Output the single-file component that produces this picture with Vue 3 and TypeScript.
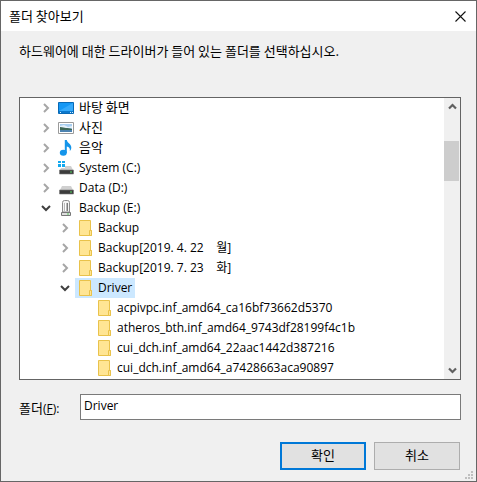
<script setup lang="ts">
import { ref } from 'vue'

type IconName = 'desktop' | 'picture' | 'music' | 'system' | 'disk' | 'usb' | 'folder'

interface TreeNode {
  label: string
  icon: IconName
  level: number
  state: 'open' | 'closed' | 'leaf'
  korean?: boolean
}

const nodes: TreeNode[] = [
  { label: '바탕 화면', icon: 'desktop', level: 0, state: 'closed', korean: true },
  { label: '사진', icon: 'picture', level: 0, state: 'closed', korean: true },
  { label: '음악', icon: 'music', level: 0, state: 'closed', korean: true },
  { label: 'System (C:)', icon: 'system', level: 0, state: 'closed' },
  { label: 'Data (D:)', icon: 'disk', level: 0, state: 'closed' },
  { label: 'Backup (E:)', icon: 'usb', level: 0, state: 'open' },
  { label: 'Backup', icon: 'folder', level: 1, state: 'closed' },
  { label: 'Backup[2019. 4. 22    월]', icon: 'folder', level: 1, state: 'closed' },
  { label: 'Backup[2019. 7. 23    화]', icon: 'folder', level: 1, state: 'closed' },
  { label: 'Driver', icon: 'folder', level: 1, state: 'open' },
  { label: 'acpivpc.inf_amd64_ca16bf73662d5370', icon: 'folder', level: 2, state: 'leaf' },
  { label: 'atheros_bth.inf_amd64_9743df28199f4c1b', icon: 'folder', level: 2, state: 'leaf' },
  { label: 'cui_dch.inf_amd64_22aac1442d387216', icon: 'folder', level: 2, state: 'leaf' },
  { label: 'cui_dch.inf_amd64_a7428663aca90897', icon: 'folder', level: 2, state: 'leaf' },
]

const selected = ref(9)
const folder = ref('Driver')

function select(index: number) {
  selected.value = index
  folder.value = nodes[index].label
}
</script>

<template>
  <main class="dialog" role="dialog" aria-labelledby="dialog-title">
    <header class="titlebar">
      <h1 id="dialog-title">폴더 찾아보기</h1>
      <button class="close" type="button" aria-label="닫기">
        <svg width="11" height="11" viewBox="0 0 11 11">
          <path d="M.5 .5l10 10M10.5 .5l-10 10" fill="none" stroke="#111" stroke-width="1.1" />
        </svg>
      </button>
    </header>

    <form class="content" @submit.prevent>
      <p class="message">하드웨어에 대한 드라이버가 들어 있는 폴더를 선택하십시오.</p>

      <div class="browser">
        <ul class="tree" role="tree">
          <li
            v-for="(node, i) in nodes"
            :key="i"
            class="row"
            :class="'level-' + node.level"
            role="treeitem"
            :aria-selected="i === selected"
          >
            <span class="arrow">
              <svg v-if="node.state === 'closed'" width="12" height="12" viewBox="0 0 12 12">
                <path d="M4 2l4 4-4 4" fill="none" stroke="#a6a6a6" stroke-width="2" />
              </svg>
              <svg v-else-if="node.state === 'open'" width="12" height="12" viewBox="0 0 12 12">
                <path d="M2 4l4 4 4-4" fill="none" stroke="#404040" stroke-width="2" />
              </svg>
            </span>
            <button class="item" :class="{ selected: i === selected, korean: node.korean }" type="button" @click="select(i)">
              <svg class="icon" width="16" height="16" viewBox="0 0 16 16">
                <g v-if="node.icon === 'folder'">
                  <path d="M2.5 .5h11v10h1v5h-12z" fill="#ffe594" stroke="#e9c24b" />
                  <path d="M12.5 15.5v-5h2v5z" fill="#ffe594" stroke="#e9c24b" />
                </g>
                <g v-else-if="node.icon === 'desktop'">
                  <path d="M.5 2.5h15v11h-15z" fill="#1598f5" stroke="#0869b5" />
                  <path d="M1 11L15 3v8z" fill="#35aafb" />
                  <path d="M1 11h14v2H1z" fill="#0b78cc" />
                  <path d="M2 12.5h1M12 12.5h1M14 12.5h1" stroke="#d8f0ff" />
                </g>
                <g v-else-if="node.icon === 'picture'">
                  <path d="M.5 2.5h15v11h-15z" fill="#fff" stroke="#9a9a9a" />
                  <path d="M2 4h12v8H2z" fill="#a9cff1" />
                  <path d="M2 6l4-1 4 2 4-1v2H2z" fill="#e4f0fa" />
                  <path d="M2 7c3 0 4 1 6 1s4 0 6 1v1H2z" fill="#3d6756" />
                  <path d="M2 10h12v2H2z" fill="#4d83b0" />
                </g>
                <g v-else-if="node.icon === 'music'">
                  <ellipse cx="5.3" cy="12.8" rx="3.5" ry="3" fill="#1495ea" />
                  <path d="M6.8 0h2c.4 3 4.5 4 4.5 7.4 0 1.4-.5 2.5-1.5 3.6.5-2.7-.6-4.2-3-4.6V13h-2z" fill="#1495ea" />
                </g>
                <g v-else-if="node.icon === 'usb'">
                  <path d="M4.5 12V2.5q0-2 2-2h3q2 0 2 2V12z" fill="#f4f4f4" stroke="#8c8c8c" />
                  <path d="M6 3h4v8H6z" fill="#b9b9b9" />
                  <path d="M7.5 3v8" stroke="#fff" />
                  <path d="M9 3h1v8H9z" fill="#7d7d7d" />
                  <path d="M3.5 12.5h9v3h-9z" fill="#dedede" stroke="#777" />
                  <path d="M9 14h2" stroke="#55c65b" />
                </g>
                <g v-else>
                  <path d="M4 6h9l2 4H2z" fill="#d0d0d0" />
                  <path d="M1.5 10h14v4h-14z" fill="#3c3c3c" stroke="#777" stroke-width=".6" />
                  <path d="M12 12h2" stroke="#55df65" />
                  <g v-if="node.icon === 'system'">
                    <path d="M0 0h7v8H0z" fill="#fff" />
                    <path d="M0 1h3v2H0zM4 1h3v2H4zM0 4h3v3H0zM4 4h3v3H4z" fill="#12a9ef" />
                  </g>
                </g>
              </svg>
              <span class="label">{{ node.label }}</span>
            </button>
          </li>
        </ul>

        <div class="scrollbar">
          <button class="step" type="button" aria-label="위로">
            <svg width="9" height="7" viewBox="0 0 9 7">
              <path d="M1 5.5L4.5 2 8 5.5" fill="none" stroke="#606060" stroke-width="2.2" />
            </svg>
          </button>
          <div class="track"><div class="thumb"></div></div>
          <button class="step" type="button" aria-label="아래로">
            <svg width="9" height="7" viewBox="0 0 9 7">
              <path d="M1 1.5L4.5 5 8 1.5" fill="none" stroke="#606060" stroke-width="2.2" />
            </svg>
          </button>
        </div>
      </div>

      <div class="field">
        <label for="folder">폴더<span class="latin">(<u>F</u>):</span></label>
        <input id="folder" v-model="folder" type="text" />
      </div>

      <div class="actions">
        <button class="push primary" type="submit">확인</button>
        <button class="push" type="button">취소</button>
      </div>
    </form>

    <svg class="grip" width="8" height="8" viewBox="0 0 8 8">
      <path d="M6 0h2v2H6zM3 3h2v2H3zM6 3h2v2H6zM0 6h2v2H0zM3 6h2v2H3zM6 6h2v2H6z" fill="#bfbfbf" />
    </svg>
  </main>
</template>

<style>
body {
  margin: 0;
}
</style>

<style scoped>
.dialog {
  position: relative;
  box-sizing: border-box;
  min-height: 100vh;
  border: 1px solid #666;
  background: #f0f0f0;
  color: #000;
  font: 13px/20px 'Noto Sans CJK KR', sans-serif;
}

button,
input {
  box-sizing: border-box;
  margin: 0;
  padding: 0;
  border: 0;
  border-radius: 0;
  background: none;
  color: inherit;
  font: inherit;
}

.titlebar {
  display: flex;
  align-items: center;
  justify-content: space-between;
  height: 30px;
  padding-left: 8px;
  background: #fff;
}

h1 {
  margin: 0;
  font: inherit;
}

.close {
  display: grid;
  place-items: center;
  width: 31px;
  height: 28px;
}

.content {
  padding: 10px 15px 11px 18px;
}

.message {
  margin: 0 0 36px;
}

.browser {
  display: flex;
  border: 1px solid #646464;
  background: #fff;
}

.tree {
  flex: 1;
  min-width: 0;
  margin: 0;
  padding: 0 0 1px;
  overflow: hidden;
  list-style: none;
}

.row {
  display: flex;
  height: 20px;
  padding-left: 20px;
}

.level-1 {
  padding-left: 39px;
}

.level-2 {
  padding-left: 58px;
}

.arrow {
  display: grid;
  place-items: center;
  width: 12px;
  margin-right: 4px;
}

.item {
  display: flex;
  align-items: center;
  gap: 5px;
  padding: 0 3px 0 2px;
  font: 12px/20px 'Open Sans', 'Noto Sans CJK KR', sans-serif;
  white-space: pre;
}

.item.korean {
  font: 13px/20px 'Noto Sans CJK KR', sans-serif;
}

.item.korean .label {
  padding-bottom: 2px;
}

.item.selected {
  background: #cce8ff;
}

.icon {
  flex: none;
}

.scrollbar {
  display: flex;
  flex-direction: column;
  width: 16px;
  background: #f0f0f0;
}

.step {
  display: grid;
  place-items: center;
  height: 17px;
}

.track {
  flex: 1;
  padding-top: 26px;
}

.thumb {
  width: 15px;
  height: 40px;
  background: #cdcdcd;
}

.field {
  display: flex;
  align-items: center;
  margin-top: 14px;
}

.field label {
  width: 61px;
  padding-top: 3px;
}

.latin {
  font: 12px/20px 'Open Sans', sans-serif;
}

.field input {
  flex: 1;
  min-width: 0;
  height: 26px;
  padding: 0 3px 4px;
  border: 1px solid #7a7a7a;
  background: #fff;
  font: 12px/20px 'Open Sans', 'Noto Sans CJK KR', sans-serif;
  outline: none;
}

.actions {
  display: flex;
  justify-content: flex-end;
  gap: 8px;
  margin-top: 22px;
  padding-right: 1px;
}

.push {
  width: 86px;
  height: 28px;
  padding-bottom: 2px;
  border: 1px solid #adadad;
  background: #e1e1e1;
}

.push.primary {
  border: 2px solid #0078d7;
}

.grip {
  position: absolute;
  right: 3px;
  bottom: 2px;
}
</style>
